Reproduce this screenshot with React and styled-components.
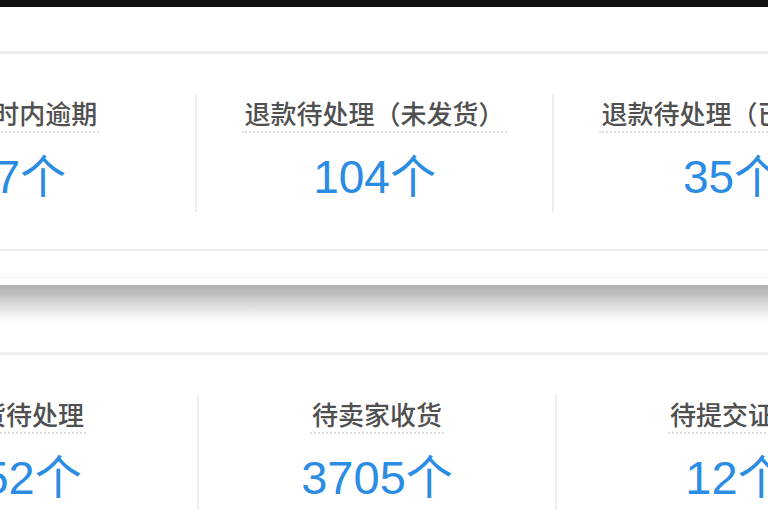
import React from "react";
import styled, { createGlobalStyle } from "styled-components";

const Global = createGlobalStyle`
  html, body { margin: 0; padding: 0; background: #fff; overflow: hidden; }
  body { font-family: "Noto Sans CJK SC", "Liberation Sans", sans-serif; }
`;

const Page = styled.div`
  width: 768px;
  height: 510px;
  overflow: hidden;
  background: #fff;
`;

const TopBar = styled.div`
  height: 7px;
  background: #111;
`;

const Card = styled.section`
  margin-top: ${(p) => p.$top}px;
  border-top: 3px solid #eeeeee;
  border-bottom: ${(p) => (p.$closed ? "2px solid #ededed" : "none")};
  padding-top: 40px;
  padding-bottom: ${(p) => (p.$closed ? 37 : 0)}px;
  background: #fff;
`;

const Row = styled.div`
  display: grid;
  grid-template-columns: repeat(3, ${(p) => p.$col}px);
  margin-left: ${(p) => p.$shift}px;
`;

const Cell = styled.div`
  display: flex;
  flex-direction: column;
  align-items: center;
  padding: 4px 0 10px;
  border-left: ${(p) => (p.$first ? "2px solid transparent" : "2px solid #eeeeee")};
  min-height: ${(p) => p.$h}px;
  box-sizing: border-box;
`;

const Label = styled.div`
  font-family: "Noto Sans CJK SC", sans-serif;
  font-size: 26px;
  font-weight: 500;
  line-height: 30px;
  color: #505050;
  padding: 0 2px 3px;
  border-bottom: 2px dotted #dedede;
  white-space: nowrap;
`;

const Value = styled.div`
  margin-top: 15px;
  font-family: "Liberation Sans", Arial, "Noto Sans CJK SC", sans-serif;
  font-size: ${(p) => p.$size}px;
  line-height: 50px;
  color: #2b8ce3;
  white-space: nowrap;
`;

const Unit = styled.span`
  font-family: "Noto Sans CJK SC", sans-serif;
  font-weight: 400;
`;

const Shade = styled.div`
  margin-top: 26px;
  border-top: 1px solid #f2f2f2;
  padding-top: 7px;
  &::after {
    content: "";
    display: block;
    height: 40px;
    background: linear-gradient(
      to bottom,
      #b1b1b1 0%,
      #bdbdbd 20%,
      #d6d6d6 45%,
      #eeeeee 70%,
      #fbfbfb 88%,
      #ffffff 100%
    );
  }
`;

const top = [
  { label: "24小时内逾期", value: "17" },
  { label: "退款待处理（未发货）", value: "104" },
  { label: "退款待处理（已发货）", value: "35" },
];

const bottom = [
  { label: "退货待处理", value: "152" },
  { label: "待卖家收货", value: "3705" },
  { label: "待提交证据", value: "12" },
];

function Stats({ items, col, shift, h, size }) {
  return (
    <Row $col={col} $shift={shift}>
      {items.map((it, i) => (
        <Cell key={it.label} $first={i === 0} $h={h}>
          <Label>{it.label}</Label>
          <Value $size={size}>
            {it.value}
            <Unit>个</Unit>
          </Value>
        </Cell>
      ))}
    </Row>
  );
}

export default function App() {
  return (
    <Page>
      <Global />
      <TopBar />
      <Card $top={44} $closed>
        <Stats items={top} col={357} shift={-162} h={115} size={46} />
      </Card>
      <Shade />
      <Card $top={27}>
        <Stats items={bottom} col={358} shift={-161} h={140} size={47} />
      </Card>
    </Page>
  );
}
